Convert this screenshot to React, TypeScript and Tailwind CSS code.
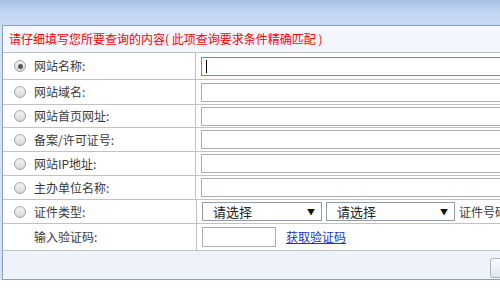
import React from 'react';

const rows = [
  { label: '网站名称:', h: 'h-[27px]', checked: true, focus: true },
  { label: '网站域名:', h: 'h-[25px]' },
  { label: '网站首页网址:', h: 'h-[23px]' },
  { label: '备案/许可证号:', h: 'h-[24px]' },
  { label: '网站IP地址:', h: 'h-[24px]' },
  { label: '主办单位名称:', h: 'h-[24px]' },
];

function Radio({ checked }: { checked?: boolean }) {
  return (
    <span className="w-[12px] h-[12px] rounded-full border border-[#a4a4a4] bg-gradient-to-b from-[#f4f4f4] to-[#d6d6d6] flex items-center justify-center shrink-0">
      {checked && <span className="w-[5px] h-[5px] rounded-full bg-[#555]" />}
    </span>
  );
}

function Select({ width }: { width: string }) {
  return (
    <div className={`${width} h-[19px] border border-[#8e9daf] bg-white flex items-center justify-between pl-[10px] pr-[6px] text-[13px] text-[#222]`}>
      <span>请选择</span>
      <span className="text-[8px] text-[#111]">▼</span>
    </div>
  );
}

export default function App() {
  return (
    <div className="w-[500px] h-[300px] overflow-hidden bg-white font-['Noto_Sans_CJK_SC',sans-serif] text-[12px]">
      <div className="h-[280px] bg-[#d3e1f5]">
        {/* top bar */}
        <div className="h-[25px] bg-gradient-to-b from-[#a6c0e6] via-[#c2d6f2] to-[#c9daf4]" />

        <div className="ml-[2px] w-[540px] h-[255px] border border-[#8b9fbd] bg-[#f3f6fc]">
          {/* header */}
          <div className="h-[27px] pl-[6px] flex items-center text-[#ff0000] border-b border-[#c2c2c2]">
            请仔细填写您所要查询的内容( 此项查询要求条件精确匹配 )
          </div>

          {rows.map((r) => (
            <div key={r.label} className={`${r.h} flex bg-white border-b border-[#c2c2c2]`}>
              <div className="w-[194px] border-r border-[#c2c2c2] flex items-center gap-[8px] pl-[11px] text-[#3a3a3a]">
                <Radio checked={r.checked} />
                <span>{r.label}</span>
              </div>
              <div className="flex-1 flex items-center pl-[5px]">
                <div
                  className={`w-[340px] h-[19px] bg-white border flex items-center pl-[4px] ${
                    r.focus ? 'border-[#5b8fd0]' : 'border-[#abadb3]'
                  }`}
                >
                  {r.focus && <span className="w-[1px] h-[13px] bg-black" />}
                </div>
              </div>
            </div>
          ))}

          {/* 证件类型 */}
          <div className="h-[24px] flex bg-white border-b border-[#c2c2c2]">
            <div className="w-[194px] border-r border-[#c2c2c2] flex items-center gap-[8px] pl-[11px] text-[#3a3a3a]">
              <Radio />
              <span>证件类型:</span>
            </div>
            <div className="flex-1 flex items-center pl-[5px] gap-[4px]">
              <Select width="w-[120px]" />
              <Select width="w-[129px]" />
              <span className="text-[#3a3a3a] whitespace-nowrap">证件号码:</span>
            </div>
          </div>

          {/* 验证码 */}
          <div className="h-[27px] flex bg-white border-b border-[#c2c2c2]">
            <div className="w-[194px] border-r border-[#c2c2c2] flex items-center pl-[31px] text-[#3a3a3a]">
              输入验证码:
            </div>
            <div className="flex-1 flex items-center pl-[5px] gap-[10px]">
              <div className="w-[74px] h-[20px] bg-white border border-[#abadb3]" />
              <a className="text-[#1a35c4] underline cursor-pointer">获取验证码</a>
            </div>
          </div>

          {/* footer */}
          <div className="h-[27px] bg-[#eef2f9] flex items-center pl-[487px]">
            <div className="w-[40px] h-[20px] mt-[6px] rounded-[3px] border border-[#a9b3c1] bg-gradient-to-b from-[#f8fafc] to-[#e2e7ee]" />
          </div>
        </div>
      </div>
    </div>
  );
}
